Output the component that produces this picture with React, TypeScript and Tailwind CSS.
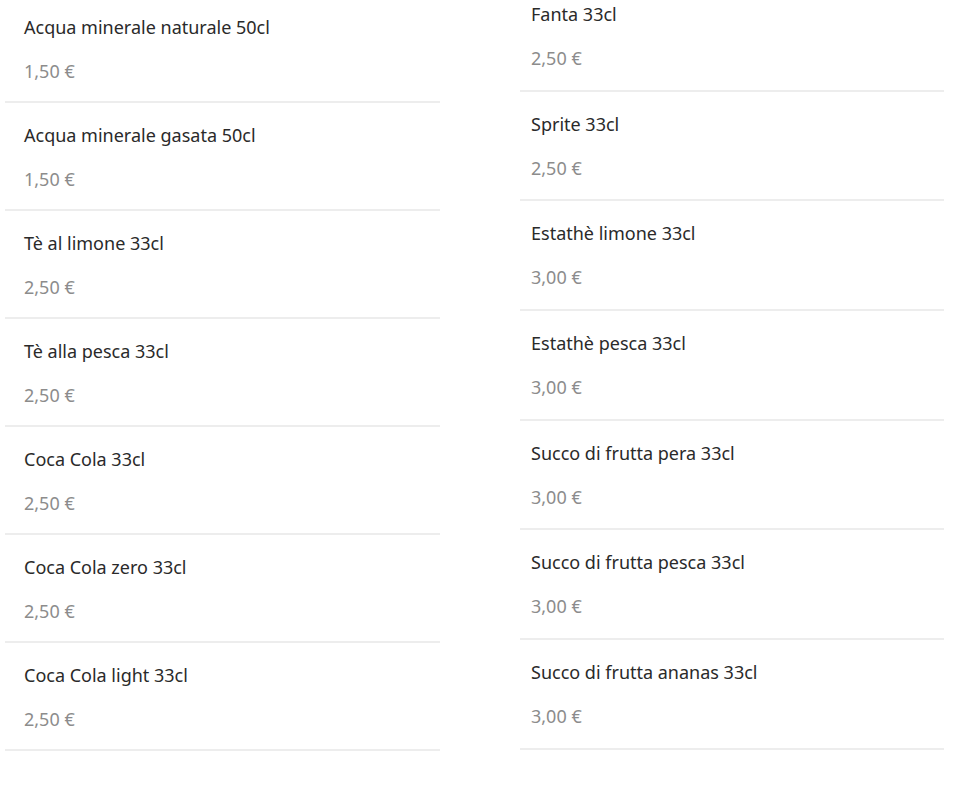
const left = [
  ['Acqua minerale naturale 50cl', '1,50 €'],
  ['Acqua minerale gasata 50cl', '1,50 €'],
  ['Tè al limone 33cl', '2,50 €'],
  ['Tè alla pesca 33cl', '2,50 €'],
  ['Coca Cola 33cl', '2,50 €'],
  ['Coca Cola zero 33cl', '2,50 €'],
  ['Coca Cola light 33cl', '2,50 €'],
];

const right = [
  ['Fanta 33cl', '2,50 €'],
  ['Sprite 33cl', '2,50 €'],
  ['Estathè limone 33cl', '3,00 €'],
  ['Estathè pesca 33cl', '3,00 €'],
  ['Succo di frutta pera 33cl', '3,00 €'],
  ['Succo di frutta pesca 33cl', '3,00 €'],
  ['Succo di frutta ananas 33cl', '3,00 €'],
];

function Item({ name, price, pad, h }: { name: string; price: string; pad: string; h: string }) {
  return (
    <div className={`${h} ${pad} flex flex-col border-b-2 border-[#ededed]`}>
      <div className="pt-[20px] text-[18px] leading-[24px] text-[#2a2a2a]">{name}</div>
      <div className="mt-[20px] text-[18px] leading-[24px] text-[#8c8c8c]">{price}</div>
    </div>
  );
}

export default function App() {
  return (
    <div className="h-[805px] w-[960px] overflow-hidden bg-white flex font-['Noto_Sans',sans-serif]">
      <div className="ml-[5px] w-[435px] -mt-[5px]">
        {left.map(([n, p]) => (
          <Item key={n} name={n} price={p} pad="pl-[19px]" h="h-[108px]" />
        ))}
      </div>
      <div className="ml-[80px] w-[424px] -mt-[18px]">
        {right.map(([n, p]) => (
          <Item key={n} name={n} price={p} pad="pl-[11px]" h="h-[109.7px]" />
        ))}
      </div>
    </div>
  );
}
